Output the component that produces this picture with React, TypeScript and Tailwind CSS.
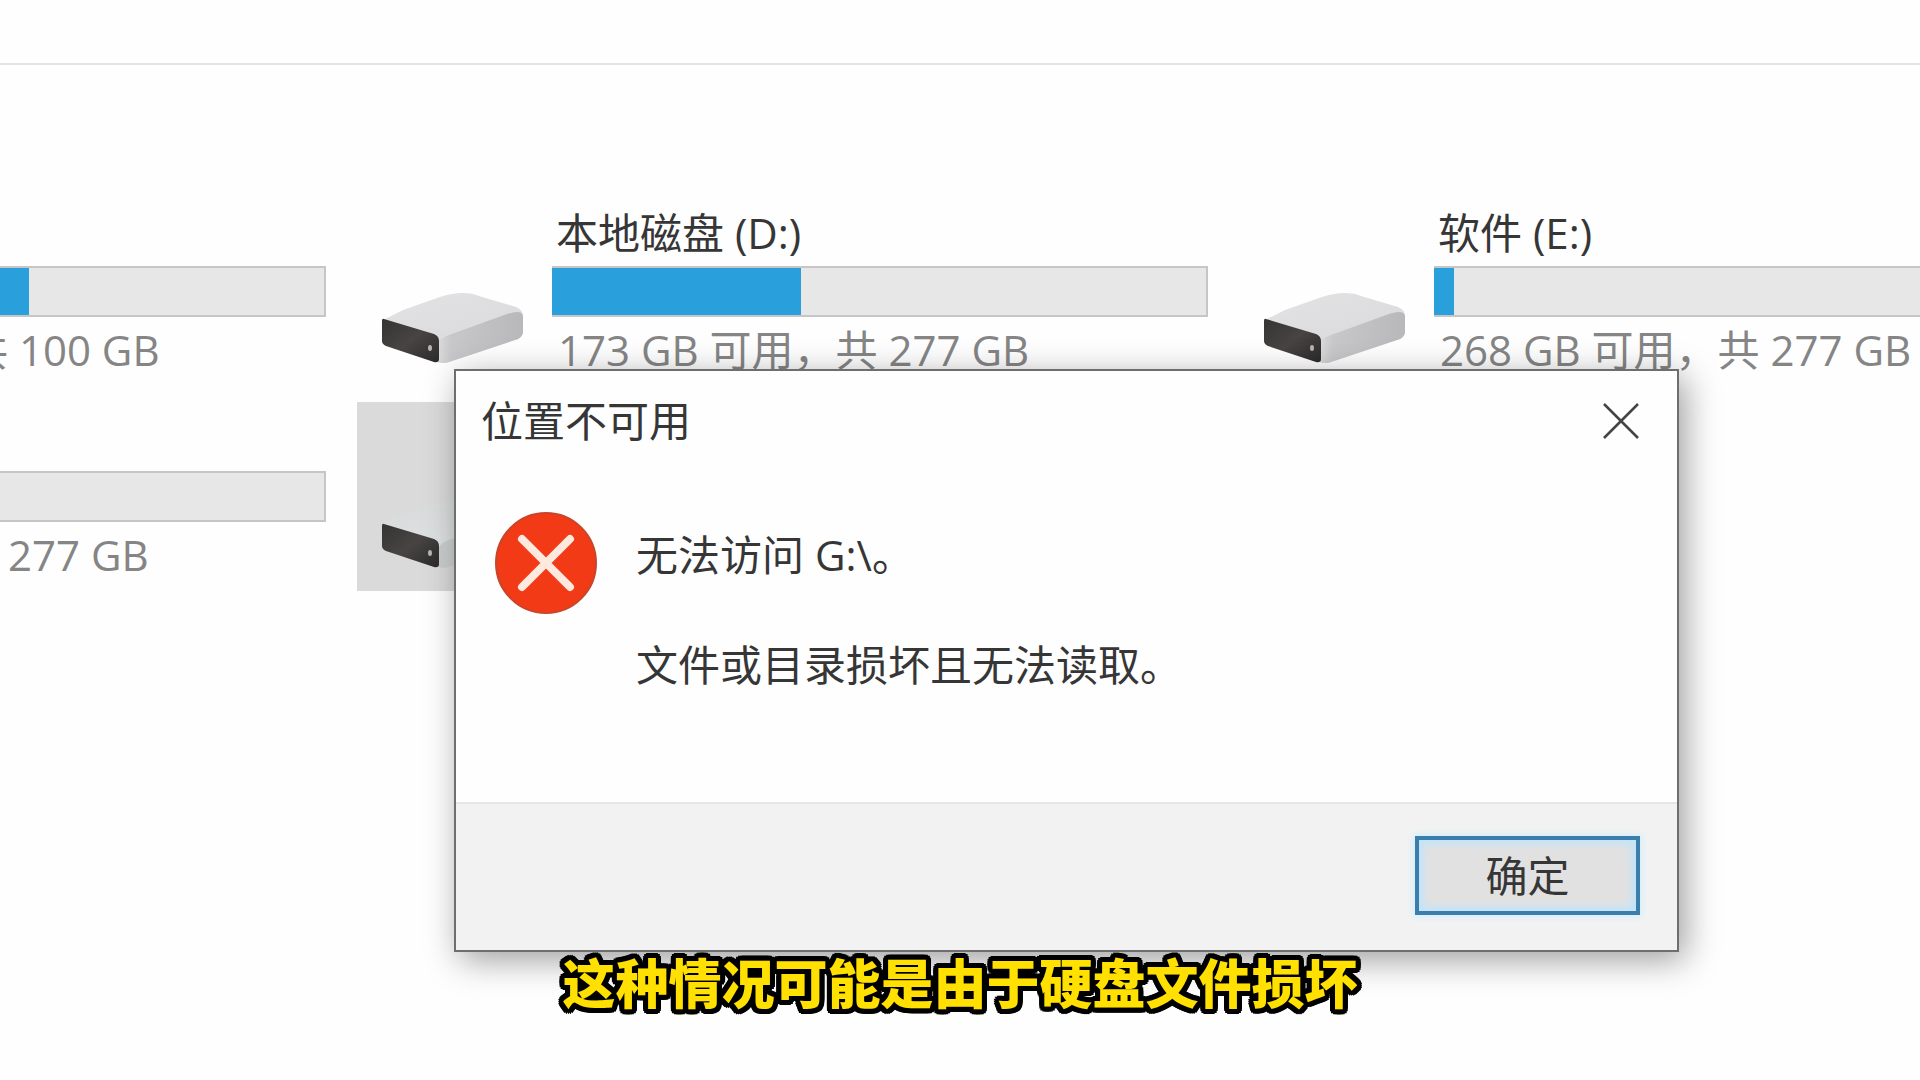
import React from "react";

interface DriveIconProps {
  faded?: boolean;
}

const DriveIcon: React.FC<DriveIconProps> = ({ faded = false }) => {
  const id = faded ? "faded" : "solid";
  return (
    <svg
      viewBox="0 0 143 72"
      className="mb-[9px] h-[72px] w-[143px] shrink-0"
      aria-hidden="true"
    >
      <defs>
        <linearGradient id={`top-${id}`} x1="0" y1="0" x2="0.6" y2="1">
          <stop offset="0" stopColor={faded ? "#d8dada" : "#e3e3e4"} />
          <stop offset="1" stopColor={faded ? "#e0e4e4" : "#d9d9dc"} />
        </linearGradient>
        <linearGradient id={`side-${id}`} x1="0" y1="0" x2="1" y2="0">
          <stop offset="0" stopColor={faded ? "#c9cccc" : "#dadadb"} />
          <stop offset="0.15" stopColor={faded ? "#cfd2d2" : "#c8c8ca"} />
          <stop offset="1" stopColor="#b8b8ba" />
        </linearGradient>
        <linearGradient id={`face-${id}`} x1="0" y1="0" x2="1" y2="1">
          <stop offset="0" stopColor="#353333" />
          <stop offset="0.5" stopColor="#474443" />
          <stop offset="1" stopColor="#2c2a2a" />
        </linearGradient>
      </defs>
      <path
        d="M2 27 L22 17 L56 5 Q70 0 82 0 Q92 0 98 3 L135 14 Q142 17 142 23 L142 39 Q142 43 137 46 L68 69 Q62 71 56 69 L3 51 Z"
        fill={`url(#top-${id})`}
      />
      <path
        d="M57 52 Q58 45 68 42 L126 21 Q141 16 142 23 L142 39 Q142 43 137 46 L68 69 Q62 71 57 69 Z"
        fill={`url(#side-${id})`}
      />
      <path
        d="M3 26 L53 41 Q58 43 58 48 L58 66 Q58 70 53 69 L5 53 Q1 51 1 48 L1 28 Q1 25 3 26 Z"
        fill={`url(#face-${id})`}
      />
      <ellipse cx="49" cy="55" rx="2" ry="3" fill="#b5b5b5" />
    </svg>
  );
};

interface CapacityBarProps {
  used: number;
  label: string;
}

const CapacityBar: React.FC<CapacityBarProps> = ({ used, label }) => (
  <div
    role="meter"
    aria-label={label}
    aria-valuemin={0}
    aria-valuemax={100}
    aria-valuenow={used}
    className="h-[51px] border-2 border-[#c6c6c6] bg-[#e7e7e7]"
  >
    {used > 0 && (
      <div className="-m-0.5 h-[51px] py-0.5">
        <div className="h-full bg-[#29a0dc]" style={{ width: `${used}%` }} />
      </div>
    )}
  </div>
);

interface DriveTileProps {
  name: string;
  caption: string;
  used: number;
}

const DriveTile: React.FC<DriveTileProps> = ({ name, caption, used }) => (
  <div className="flex h-[189px] items-end pb-3 pl-6">
    <DriveIcon />
    <div className="ml-7 flex min-w-0 flex-1 flex-col gap-[9px]">
      <p className="pl-1 text-[#363636]">{name}</p>
      <CapacityBar used={used} label={name} />
      <p className="pl-1.5 text-[#858585]">{caption}</p>
    </div>
  </div>
);

const ErrorIcon = () => (
  <svg
    viewBox="0 0 104 104"
    className="h-[104px] w-[104px] shrink-0"
    aria-hidden="true"
  >
    <circle cx="52" cy="52" r="50" fill="#f23a17" stroke="#c8452a" strokeWidth="2" />
    <path
      d="M28 28 L76 76 M76 28 L28 76"
      stroke="#fde9de"
      strokeWidth="8"
      strokeLinecap="round"
    />
  </svg>
);

const ErrorDialog = () => (
  <section
    role="alertdialog"
    aria-labelledby="dialog-title"
    aria-describedby="dialog-message"
    className="absolute top-[369px] right-[241px] left-[454px] flex h-[583px] flex-col border-2 border-[#6e6e6e] bg-[#fefefe] text-[#363636] shadow-[6px_8px_32px_rgba(0,0,0,0.38)]"
  >
    <header className="flex items-center justify-between pt-[26px] pr-9 pl-[25px]">
      <h1 id="dialog-title">位置不可用</h1>
      <button type="button" aria-label="关闭" className="p-0.5">
        <svg viewBox="0 0 36 36" className="h-9 w-9" aria-hidden="true">
          <path d="M1 1 L35 35 M35 1 L1 35" stroke="#444" strokeWidth="2.5" />
        </svg>
      </button>
    </header>
    <div className="flex flex-1 items-start gap-[38px] pt-[66px] pl-[38px]">
      <ErrorIcon />
      <div id="dialog-message" className="flex flex-col gap-[62px] pt-[20px]">
        <p>无法访问 G:\。</p>
        <p>文件或目录损坏且无法读取。</p>
      </div>
    </div>
    <footer className="flex h-[148px] items-start justify-end border-t-2 border-[#e6e6e6] bg-[#f2f2f2] pt-8 pr-[37px]">
      <button
        type="button"
        className="h-[79px] w-[225px] border-4 border-[#3b7eac] bg-[#e2e1e1] shadow-[inset_0_0_6px_5px_#c4e4f8,0_0_6px_2px_#d5eefb]"
      >
        确定
      </button>
    </footer>
  </section>
);

export default function App() {
  return (
    <div className="relative min-h-screen overflow-hidden bg-[#fefefe] font-['Open_Sans','Noto_Sans_CJK_SC',sans-serif] text-[42px] leading-[48px] whitespace-nowrap">
      <div className="h-[65px] border-b-2 border-[#e4e4e4]" />
      <main className="grid grid-cols-[357fr_882fr_681fr] gap-y-4 pt-[132px]">
        <div className="flex h-[189px] min-w-0 flex-col justify-end gap-[9px] pr-[31px] pb-3">
          <CapacityBar used={9} label="C:" />
          <p className="-ml-[34px] text-[#858585]">共 100 GB</p>
        </div>
        <div className="min-w-0 pr-[31px]">
          <DriveTile
            name="本地磁盘 (D:)"
            caption="173 GB 可用，共 277 GB"
            used={38}
          />
        </div>
        <div className="-mr-1 min-w-0">
          <DriveTile
            name="软件 (E:)"
            caption="268 GB 可用，共 277 GB"
            used={4}
          />
        </div>
        <div className="flex h-[189px] min-w-0 flex-col justify-end gap-[9px] pr-[31px] pb-3">
          <div className="-ml-1">
            <CapacityBar used={0} label="F:" />
          </div>
          <p className="pl-2 text-[#858585]">277 GB</p>
        </div>
        <div className="flex h-[189px] items-end bg-[#dadada] pb-3 pl-6">
          <DriveIcon faded />
        </div>
      </main>

      <ErrorDialog />

      {/* rounded outline built from a ring of hard shadows */}
      <p className="absolute inset-x-0 top-[949px] text-center font-['Noto_Sans_CJK_SC',sans-serif] text-[53px] leading-[64px] font-black text-[#ffe000] [text-shadow:5px_0_#000,-5px_0_#000,0_5px_#000,0_-5px_#000,4px_4px_#000,-4px_4px_#000,4px_-4px_#000,-4px_-4px_#000,5px_2px_#000,-5px_2px_#000,5px_-2px_#000,-5px_-2px_#000,2px_5px_#000,-2px_5px_#000,2px_-5px_#000,-2px_-5px_#000,2px_2px_#000,-2px_-2px_#000,2px_-2px_#000,-2px_2px_#000]">
        这种情况可能是由于硬盘文件损坏
      </p>
    </div>
  );
}
